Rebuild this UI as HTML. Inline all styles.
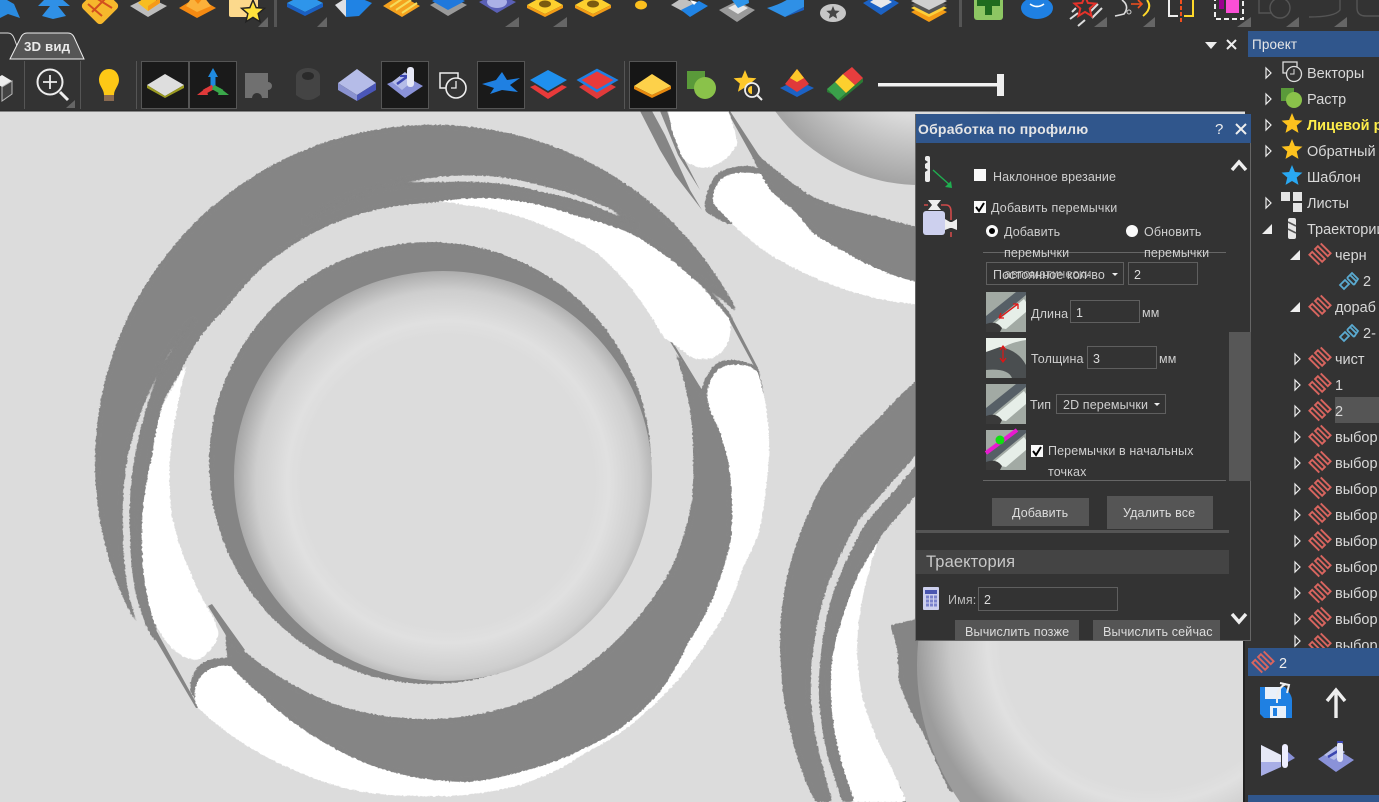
<!DOCTYPE html>
<html><head><meta charset="utf-8"><style>
html,body{margin:0;padding:0;width:1379px;height:802px;overflow:hidden;background:#333}
svg{display:block}
text{font-family:"Liberation Sans","DejaVu Sans",sans-serif;fill:#cfcfcf;font-size:12.5px;letter-spacing:.12px}
.tr{font-size:14.5px;fill:#d8d8d8;letter-spacing:0}
</style></head><body>
<svg width="1379" height="802" viewBox="0 0 1379 802" xmlns="http://www.w3.org/2000/svg">
<defs>
<radialGradient id="bowl" gradientUnits="userSpaceOnUse" cx="448" cy="482" r="218"><stop offset="0" stop-color="#dcdcdc"/><stop offset=".67" stop-color="#dcdcdc"/><stop offset=".74" stop-color="#e0e0e0"/><stop offset=".88" stop-color="#cecece"/><stop offset="1" stop-color="#a0a0a0"/></radialGradient>
<radialGradient id="bowl2" gradientUnits="userSpaceOnUse" cx="1150" cy="640" r="233"><stop offset=".64" stop-color="#dcdcdc"/><stop offset=".7" stop-color="#e0e0e0"/><stop offset=".86" stop-color="#c8c8c8"/><stop offset="1" stop-color="#9c9c9c"/></radialGradient>
<radialGradient id="bowl3" gradientUnits="userSpaceOnUse" cx="925" cy="5" r="180"><stop offset=".62" stop-color="#dcdcdc"/><stop offset="1" stop-color="#a4a4a4"/></radialGradient>
<filter id="b6"><feGaussianBlur stdDeviation="6"/></filter>
<filter id="sm" filterUnits="userSpaceOnUse" x="-20" y="80" width="1300" height="760" color-interpolation-filters="sRGB">
<feGaussianBlur stdDeviation="2"/>
<feComponentTransfer result="a"><feFuncA type="linear" slope="8" intercept="-3.5"/></feComponentTransfer>
<feTurbulence type="fractalNoise" baseFrequency=".45" numOctaves="1" seed="3" result="n"/>
<feDisplacementMap in="a" in2="n" scale="3" xChannelSelector="R" yChannelSelector="G"/>
</filter>
<polygon id="star" points="0,-1 .264,-.364 .951,-.309 .428,.139 .588,.809 0,.45 -.588,.809 -.428,.139 -.951,-.309 -.264,-.364"/>
<path id="zz" transform="rotate(45)" d="M-7,-8H7V-4H-7V0H7V4H-7V8H7" fill="none" stroke="#d8655f" stroke-width="1.9"/>
<path id="hz" d="M0,-5 L5,0 L0,5 Z" fill="none" stroke="#eee" stroke-width="1.2"/>
<path id="ex" d="M5,-5 V5 H-5 Z" fill="#eee"/>
<g id="thb"><rect width="40" height="40" fill="#a2aaa4"/><polygon points="0,24 30,0 40,0 40,3 0,36" fill="#565f66"/><polygon points="8,32 38,7 40,10 40,20 20,37 14,36" fill="#e6eee8"/><path d="M0,40 V32 Q10,28 16,36 L14,40 Z" fill="#3a3a3a"/></g>
<path id="rol" d="M1,14 L5,18 L10,13 L6,9 Z M8,7 L15,14 M11,4 L18,11 M8,7 L13,2 L19,8 L15,14" fill="none" stroke="#5aaad0" stroke-width="1.8"/>
</defs>

<rect width="1379" height="802" fill="#333"/>

<!-- 3D viewport -->
<rect x="0" y="111" width="1245" height="691" fill="#dcdcdc"/>
<svg x="0" y="111" width="1245" height="691" viewBox="0 111 1245 691" overflow="hidden">
<!-- thin tails -->
<g fill="#858585">
<polygon points="640,111 652,111 665,135 690,190 702,210 675,175 660,150"/>
<polygon points="660,111 667,111 682,155 700,190 678,155"/>
<polygon points="647,303 650,305 702,390 699,390"/>
<polygon points="150,630 156,630 199,708 196,708"/>
<polygon points="727,111 730,111 762,160 757,165"/>
<polygon points="728,318 732,318 758,368 755,368"/>
<polygon points="208,606 212,604 245,650 238,655"/>
<polygon points="897,786 900,786 906,802 903,802"/>
</g>
<!-- cap blobs -->
<g fill="#858585" filter="url(#sm)">
<path d="M190,692 Q190,672 202,663 Q220,654 240,660 L260,690 L205,712 Z"/>
<path d="M700,395 Q705,372 718,362 Q735,356 758,367 L764,395 L720,415 Z"/>
<path d="M705,212 Q704,188 718,173 Q735,163 757,167 L785,200 L730,225 Z"/>
</g>
<!-- white lobes -->
<g fill="#fff" filter="url(#sm)">
<path d="M197,343 A300,300 0 0 0 188,363 300,300 0 0 0 177,410 300,300 0 0 0 170,460 300,300 0 0 0 172,517 300,300 0 0 0 188,567 300,300 0 0 0 213,617 L219,633 Q215,650 198,660 Q180,660 165,640 L140,600 L135,530 L145,460 L160,410 Z"/>
<path d="M197,707 A320,320 0 0 0 220,727 320,320 0 0 0 287,767 320,320 0 0 0 353,790 320,320 0 0 0 420,796 320,320 0 0 0 453,796 320,320 0 0 0 520,785 320,320 0 0 0 553,772 320,320 0 0 0 587,752 320,320 0 0 0 620,733 320,320 0 0 0 664,695 320,320 0 0 0 700,652 320,320 0 0 0 728,607 320,320 0 0 0 743,567 320,320 0 0 0 759,533 320,320 0 0 0 765,495 320,320 0 0 0 769,433 320,320 0 0 0 765,400 L758,372 Q745,360 722,367 Q708,375 707,397 L700,400 L705,460 L705,600 L600,700 L437,770 L320,730 L263,690 L238,667 Q218,662 205,672 Q190,685 197,707 Z"/>
<path d="M430,200 L480,192 L530,197 L580,211 L630,227 L680,261 L713,294 L730,320 Q733,345 718,355 Q708,362 692,358 A300,300 0 0 0 663,337 300,300 0 0 0 630,287 300,300 0 0 0 597,253 300,300 0 0 0 547,227 300,300 0 0 0 480,207 Z"/>
<path d="M667,105 L727,105 L738,142 Q730,162 707,168 Q690,168 682,157 L672,130 Z"/>
<path d="M713,203 Q712,185 725,176 Q745,168 775,178 L813,225 L863,258 L925,277 L925,305 A300,300 0 0 1 863,295 300,300 0 0 1 813,277 300,300 0 0 1 763,250 300,300 0 0 1 713,203 Z"/>
<path d="M883,530 A300,300 0 0 0 868,575 300,300 0 0 0 857,653 300,300 0 0 0 863,700 300,300 0 0 0 891,767 L907,802 L845,802 L825,700 L827,653 L840,610 L855,570 Z"/>
</g>
<!-- dark bands -->
<g fill="#858585" filter="url(#sm)">
<path d="M155,655 A338,338 0 0 1 480,128 A338,338 0 0 1 740,317 A320,320 0 0 0 680,267 320,320 0 0 0 613,210 320,320 0 0 0 547,187 320,320 0 0 0 500,177 320,320 0 0 0 430,178 320,320 0 0 0 347,198 320,320 0 0 0 280,240 320,320 0 0 0 213,300 320,320 0 0 0 170,350 320,320 0 0 0 140,415 320,320 0 0 0 128,455 320,320 0 0 0 123,500 320,320 0 0 0 123,533 320,320 0 0 0 130,600 320,320 0 0 0 145,640 Z"/>
<path d="M135,455 A300,300 0 0 1 143,420 300,300 0 0 1 160,373 300,300 0 0 1 187,330 300,300 0 0 1 220,287 300,300 0 0 1 267,243 300,300 0 0 1 313,218 300,300 0 0 1 380,188 300,300 0 0 1 447,182 300,300 0 0 1 480,182 300,300 0 0 1 547,193 300,300 0 0 1 597,207 300,300 0 0 1 647,233 300,300 0 0 1 697,280 300,300 0 0 1 730,313 L757,367 L730,320 A300,300 0 0 0 713,300 300,300 0 0 0 680,267 300,300 0 0 0 630,233 300,300 0 0 0 580,217 300,300 0 0 0 530,203 300,300 0 0 0 480,198 300,300 0 0 0 430,203 300,300 0 0 0 363,213 300,300 0 0 0 313,233 300,300 0 0 0 263,267 300,300 0 0 0 227,307 300,300 0 0 0 203,333 300,300 0 0 0 180,373 300,300 0 0 0 163,403 300,300 0 0 0 155,437 300,300 0 0 0 152,457 300,300 0 0 0 142,525 300,300 0 0 0 148,600 300,300 0 0 0 163,647 L150,635 A300,300 0 0 1 136,595 300,300 0 0 1 130,533 300,300 0 0 1 130,500 300,300 0 0 1 135,455 Z"/>
<path d="M227,662 A300,300 0 0 0 263,697 300,300 0 0 0 320,740 300,300 0 0 0 370,765 300,300 0 0 0 420,778 300,300 0 0 0 470,782 300,300 0 0 0 520,772 300,300 0 0 0 587,747 300,300 0 0 0 620,729 300,300 0 0 0 660,692 300,300 0 0 0 688,643 300,300 0 0 0 706,613 300,300 0 0 0 722,573 300,300 0 0 0 731,540 300,300 0 0 0 732,507 300,300 0 0 0 728,460 300,300 0 0 0 720,433 300,300 0 0 0 710,410 L707,397 L670,343 A300,300 0 0 1 680,367 300,300 0 0 1 690,410 300,300 0 0 1 693,460 300,300 0 0 1 692,500 300,300 0 0 1 672,567 300,300 0 0 1 620,637 300,300 0 0 1 520,703 300,300 0 0 1 453,718 300,300 0 0 1 403,718 300,300 0 0 1 337,705 300,300 0 0 1 280,677 300,300 0 0 1 243,650 L225,628 Z"/>
<path d="M745,140 A250,250 0 0 0 760,157 250,250 0 0 0 780,173 250,250 0 0 0 813,197 250,250 0 0 0 863,213 L925,229 L925,284 A250,250 0 0 1 880,270 250,250 0 0 1 847,253 250,250 0 0 1 813,233 250,250 0 0 1 797,213 250,250 0 0 1 770,190 L757,167 Z"/>
<path d="M925,375 L915,382 A300,300 0 0 0 880,417 300,300 0 0 0 840,460 300,300 0 0 0 822,485 300,300 0 0 0 807,517 300,300 0 0 0 783,600 300,300 0 0 0 781,667 300,300 0 0 0 791,733 300,300 0 0 0 815,802 L833,802 A300,300 0 0 1 823,767 300,300 0 0 1 811,700 300,300 0 0 1 813,653 300,300 0 0 1 823,600 300,300 0 0 1 843,550 300,300 0 0 1 859,520 300,300 0 0 1 879,497 L925,445 Z"/>
<path d="M925,455 L886,500 A300,300 0 0 0 866,523 300,300 0 0 0 850,553 300,300 0 0 0 831,600 300,300 0 0 0 821,653 300,300 0 0 0 819,700 300,300 0 0 0 831,767 L842,802 L855,802 A300,300 0 0 1 843,767 300,300 0 0 1 831,700 300,300 0 0 1 833,653 300,300 0 0 1 845,610 300,300 0 0 1 859,573 L883,533 L925,485 Z"/>
<polygon points="890,625 897,647 899,683 910,710 923,733 951,795 1000,720 1000,600"/>
<circle cx="430" cy="463" r="221"/>
</g>
<path d="M775,111 A180,180 0 0 0 925,185 H1000 V111 Z" fill="url(#bowl3)"/>
<ellipse cx="443" cy="476" rx="209" ry="205" fill="url(#bowl)"/>
<path d="M960,802 A240,240 0 0 1 917,665 A240,240 0 0 1 1157,425 H1245 V802 Z" fill="url(#bowl2)"/>
</svg>
<rect x="0" y="110" width="1245" height="1.5" fill="#2c2c2c"/>
<rect x="1243" y="640" width="2" height="162" fill="#222"/>

<!-- TOP TOOLBAR -->
<g>
<polygon points="0,-4 14,4 20,18 8,14 0,18" fill="#2a8be0"/>
<polygon points="38,6 50,-6 53,-4 56,-6 70,6 58,6 66,16 53,19 42,16 50,6" fill="#2f90e6"/>
<g><rect x="86" y="-8" width="28" height="28" transform="rotate(45 100 6)" rx="4" fill="#f6b82c"/><path d="M88,4 L102,16 M96,-2 L112,8 M106,-2 L92,12" stroke="#d2501e" stroke-width="2" fill="none"/></g>
<polygon points="130,6 148,-3 167,6 148,17" fill="#bdbdbd"/><polygon points="138,3 148,-6 160,3 148,11" fill="#f8bd20"/><polygon points="148,11 160,3 160,-2 148,6" fill="#f59a1a"/>
<polygon points="179,8 197,-3 216,8 197,18" fill="#f58a12"/><polygon points="186,6 192,-3 198,4 204,-3 211,6 197,12" fill="#fbb13a"/>
<rect x="229" y="-4" width="29" height="21" rx="2" fill="#fcd98c"/><use href="#star" transform="translate(253,12) scale(12)" fill="#ffe23c" stroke="#222" stroke-width=".12"/>
<polygon points="258,27 268,27 268,17" fill="#666"/>
<rect x="274" y="0" width="3" height="27" fill="#555"/>
<polygon points="287,3 305,-6 323,3 305,12" fill="#2e95ea"/><polygon points="287,3 305,12 323,3 323,7 305,16 287,7" fill="#1a5fc2"/>
<polygon points="317,27 327,27 327,17" fill="#666"/>
<polygon points="335,5 346,-2 346,17" fill="#dfe0e4"/><path d="M346,-2 H360 L372,3 L359,16 L346,17 Z" fill="#2083e4"/>
<polygon points="383,6 400,-5 420,6 402,17" fill="#f5a21e"/><path d="M390,7 L405,-3 M396,10 L411,0 M402,13 L417,3" stroke="#f5dc5a" stroke-width="2"/>
<polygon points="430,5 448,-4 467,5 448,16" fill="#9a9a9a"/><polygon points="432,1 448,-7 465,1 448,10" fill="#1f78dc"/>
<polygon points="479,2 497,-7 516,2 497,13" fill="#5a60b6"/><ellipse cx="497" cy="2" rx="10" ry="6" fill="#aab0e6"/>
<polygon points="505,27 519,27 519,17" fill="#666"/>
<polygon points="527,5 545,-5 563,5 545,14" fill="#fdd02e"/><polygon points="527,5 545,14 563,5 563,8 545,17 527,8" fill="#f39c16"/><ellipse cx="545" cy="4" rx="6" ry="3.5" fill="#7a5a10"/>
<polygon points="553,27 567,27 567,17" fill="#666"/>
<polygon points="575,5 593,-5 611,5 593,14" fill="#fdd02e"/><polygon points="575,5 593,14 611,5 611,8 593,17 575,8" fill="#f39c16"/><ellipse cx="593" cy="4" rx="6" ry="3.5" fill="#7a5a10"/>
<ellipse cx="641" cy="5" rx="6" ry="4.5" fill="#fbbf1e"/>
<polygon points="671,5 682,-2 700,5 686,13" fill="#c0c0c0"/><polygon points="681,10 699,1 708,6 690,17" fill="#2083e4"/><path d="M690,0 l4,5 3,-3" fill="#fff"/>
<polygon points="719,10 737,1 755,10 737,22" fill="#9a9a9a"/><polygon points="728,8 738,3 748,8 738,14" fill="#e6e6e6"/><polygon points="732,0 748,-6 749,3 738,8" fill="#2e95ea"/>
<path d="M767,8 Q785,3 795,-6 H804 V7 L785,17 Z" fill="#2f90e6"/><polygon points="767,8 785,17 804,7 804,10 785,17" fill="#1a5fc2"/>
<ellipse cx="833" cy="13" rx="13" ry="9" fill="#c6c6c6"/><use href="#star" transform="translate(833,13) scale(7)" fill="#444"/>
<polygon points="863,3 881,-7 899,3 881,15" fill="#1c62c4"/><polygon points="870,2 881,-5 892,2 881,8" fill="#e8e8ea"/>
<polygon points="911,12 929,3 947,12 929,22" fill="#f39c16"/><polygon points="911,8 929,-1 947,8 929,17" fill="#fcd03a"/><polygon points="911,5 929,-4 947,5 929,14" fill="#555"/><polygon points="911,1 929,-8 947,1 929,10" fill="#cfcfcf"/>
<rect x="959" y="0" width="3" height="27" fill="#555"/>
<rect x="974" y="-6" width="29" height="26" rx="3" fill="#8dc663"/><rect x="985" y="-6" width="7" height="21" fill="#1e6b1e"/><rect x="977" y="0" width="23" height="6" fill="#1e6b1e"/>
<ellipse cx="1037" cy="8" rx="16" ry="11" fill="#1f80e2"/><path d="M1030,4 Q1037,9 1044,4" stroke="#fff" stroke-width="1.6" fill="none"/>
<path d="M1070,19 L1078,13 M1072,12 L1076,8 M1098,4 L1090,12 M1102,8 L1092,18 M1085,20 L1078,26" stroke="#ddd" stroke-width="2"/>
<use href="#star" transform="translate(1085,7) scale(11)" fill="none" stroke="#e5322a" stroke-width=".18"/>
<polygon points="1094,27 1107,27 1107,17" fill="#666"/>
<path d="M1122,0 Q1130,6 1124,14 Q1120,15 1115,16" stroke="#ddd" stroke-width="1.6" fill="none"/><circle cx="1129" cy="12" r="2" fill="none" stroke="#ccc"/><path d="M1131,4 H1142 M1138,0 L1142,4 L1138,8" stroke="#f2501e" stroke-width="1.6" fill="none"/><path d="M1147,0 Q1153,8 1143,16" stroke="#ffd92a" stroke-width="2" fill="none"/>
<polygon points="1143,27 1155,27 1155,17" fill="#666"/>
<path d="M1169,0 V16 H1178" stroke="#eee" stroke-width="2" fill="none"/><path d="M1193,0 V16 H1184" stroke="#ffd92a" stroke-width="2" fill="none"/><path d="M1181,0 V24" stroke="#f2501e" stroke-width="2" stroke-dasharray="4 2"/>
<rect x="1215" y="-3" width="28" height="22" fill="none" stroke="#eee" stroke-width="2" stroke-dasharray="5 3"/><rect x="1226" y="0" width="13" height="13" fill="#fb4fd6"/><rect x="1219" y="-3" width="5" height="12" fill="#9c0090"/>
<polygon points="1237,27 1251,27 1251,17" fill="#666"/>
<path d="M1259,-2 V13 H1272" stroke="#555" fill="none" stroke-width="1.4"/><circle cx="1280" cy="8" r="10" fill="none" stroke="#555" stroke-width="1.4"/>
<polygon points="1286,27 1299,27 1299,17" fill="#666"/>
<path d="M1309,17 Q1335,17 1340,10 V0" stroke="#555" fill="none" stroke-width="1.4"/>
<polygon points="1334,27 1347,27 1347,17" fill="#666"/>
<path d="M1357,0 V8 Q1357,16 1366,16 H1379" stroke="#555" fill="none" stroke-width="1.4"/>
</g>

<!-- TABS -->
<path d="M0,33 H8 Q12,33 14,38 L17,46" fill="none" stroke="#ddd"/>
<path d="M10,59 L21,37 Q23,33 27,33 H68 Q72,33 74,37 L84,59 Z" fill="#555" stroke="#eee" stroke-width="1"/>
<text x="24" y="51" style="font-size:13.3px;font-weight:700;fill:#eaeaea">3D вид</text>
<polygon points="1205,42 1217,42 1211,49" fill="#eee"/>
<path d="M1227,40 L1236,49 M1236,40 L1227,49" stroke="#eee" stroke-width="2"/>

<!-- SECOND TOOLBAR -->
<g>
<polygon points="-8,81 2,75 12,81 2,87" fill="#eee"/><polygon points="12,81 12,94 2,101 2,87" fill="#444" stroke="#bbb"/>
<rect x="24" y="61" width="1" height="48" fill="#555"/><rect x="80" y="61" width="1" height="48" fill="#555"/><rect x="136" y="61" width="1" height="48" fill="#555"/><rect x="624" y="61" width="1" height="48" fill="#555"/>
<circle cx="50" cy="82" r="12.5" fill="none" stroke="#eee" stroke-width="2"/><path d="M43,82 H57 M50,75 V89" stroke="#eee" stroke-width="1.8"/><path d="M60,92 L68,100" stroke="#eee" stroke-width="3"/>
<polygon points="66,108 75,108 75,100" fill="#666"/>
<path d="M109,69 C102,69 99,75 99,80 C99,86 104,89 104,95 H114 C114,89 119,86 119,80 C119,75 116,69 109,69 Z" fill="#fdc816"/><rect x="104" y="95" width="10" height="6" fill="#8a6a50"/>
<rect x="141.5" y="61.5" width="47" height="47" fill="#1a1a1a" stroke="#555"/><rect x="189.5" y="61.5" width="47" height="47" fill="#1a1a1a" stroke="#555"/>
<polygon points="147,85 165,74 184,85 165,96" fill="#dedede"/><polygon points="147,85 165,96 184,85 184,88 165,98 147,88" fill="#9a9a20"/>
<path d="M213,88 V75" stroke="#1f8ae0" stroke-width="5"/><polygon points="213,68 208,77 218,77" fill="#1f8ae0"/>
<path d="M213,87 L204,92" stroke="#e03a3a" stroke-width="5"/><polygon points="197,95 206,88 208,95" fill="#e03a3a"/>
<path d="M213,87 L222,92" stroke="#3aa84a" stroke-width="5"/><polygon points="229,95 220,88 218,95" fill="#3aa84a"/>
<path d="M245,73 H268 V82 A4,4 0 1 1 268,90 V98 H262 A5,5 0 0 0 252,98 H245 Z" fill="#707070"/>
<ellipse cx="308" cy="76" rx="12" ry="8" fill="#444"/><ellipse cx="308" cy="76" rx="6" ry="4" fill="#2a2a2a"/><path d="M296,76 V95 Q308,105 320,95 V76 Q308,84 296,76 Z" fill="#444"/>
<polygon points="338,83 357,69 376,83 357,95" fill="#b5bce8"/><polygon points="338,83 357,95 357,101 338,90" fill="#8a92d0"/><polygon points="376,83 357,95 357,101 376,90" fill="#4a56b8"/>
<rect x="381.5" y="61.5" width="47" height="47" fill="#1a1a1a" stroke="#555"/>
<polygon points="387,84 405,76 423,86 405,98" fill="#8a92d8"/><polygon points="392,82 405,72 414,80 402,90" fill="#b5bce8"/><path d="M397,84 L408,76" stroke="#3b46b0" stroke-width="2.5"/><rect x="407" y="67" width="7" height="20" rx="3" fill="#e6e8f6"/><path d="M400,76 H407" stroke="#3b46b0" stroke-width="2"/>
<path d="M451,88 H440 V73 H458 V80" fill="none" stroke="#eee" stroke-width="1.5"/><circle cx="456" cy="88" r="10" fill="#333" stroke="#eee" stroke-width="1.6"/><path d="M456,81 V88 H451" stroke="#eee" stroke-width="1.3" fill="none"/>
<rect x="477.5" y="61.5" width="47" height="47" fill="#1a1a1a" stroke="#555"/>
<polygon points="482,84 496,80 502,72 507,80 520,78 510,85 518,92 502,90 490,94 494,88" fill="#1f80e2"/>
<polygon points="530,80 548,70 567,80 548,91" fill="#1f90ee"/><polygon points="530,87 535,85 548,93 562,85 567,87 548,99" fill="#e83a3a"/>
<polygon points="579,87 597,77 616,87 597,99" fill="#e03a3a"/><polygon points="579,80 597,70 616,80 597,91" fill="#e83a3a" stroke="#1f80e2" stroke-width="2.5"/>
<rect x="629.5" y="61.5" width="47" height="47" fill="#161616" stroke="#555"/>
<polygon points="634,86 652,74 671,86 652,95" fill="#fdd14a"/><polygon points="634,86 652,95 671,86 671,89 652,98 634,89" fill="#e8890e"/>
<rect x="687" y="71" width="18" height="18" fill="#5a9a3a"/><circle cx="705" cy="88" r="11" fill="#8ac24a"/>
<use href="#star" transform="translate(745,82) scale(12)" fill="#fdc82a"/><circle cx="752" cy="90" r="7" fill="#333" stroke="#eee" stroke-width="1.8"/><path d="M752,86 A4,4 0 0 0 752,94 Z" fill="#fdc82a"/><path d="M757,95 L762,100" stroke="#eee" stroke-width="2"/>
<polygon points="780,88 797,80 814,88 797,97" fill="#1c62c4"/><polygon points="785,84 797,69 809,84 797,92" fill="#e03a3a"/><polygon points="790,78 797,69 804,78 797,82" fill="#fdc82a"/>
<polygon points="827,89 838,100 838,97 827,92" fill="#2a7a34"/><polygon points="838,100 863,78 863,82 840,101" fill="#2a7a34"/>
<polygon points="827,89 835,82 846,93 838,100" fill="#3aa04a"/><polygon points="835,82 843,74 855,85 846,93" fill="#fdd02e"/><polygon points="843,74 852,67 863,78 855,85" fill="#e63e3e"/>
<rect x="878" y="83" width="120" height="3.5" fill="#f2f2f2"/><rect x="997" y="74" width="7" height="22" fill="#eee"/>
</g>

<!-- PROJECT SIDEBAR -->
<rect x="1245" y="28" width="134" height="774" fill="#333"/>
<rect x="1248" y="31" width="131" height="26" fill="#30568c"/>
<text x="1252" y="49" style="font-size:13.5px;fill:#e8e8e8">Проект</text>
<use href="#hz" x="1266" y="73"/><use href="#hz" x="1266" y="99"/><use href="#hz" x="1266" y="125"/><use href="#hz" x="1266" y="151"/><use href="#hz" x="1266" y="203"/>
<use href="#ex" x="1267" y="229"/><use href="#ex" x="1295" y="255"/><use href="#ex" x="1295" y="307"/>
<use href="#hz" x="1295" y="359"/><use href="#hz" x="1295" y="385"/><use href="#hz" x="1295" y="411"/><use href="#hz" x="1295" y="437"/><use href="#hz" x="1295" y="463"/><use href="#hz" x="1295" y="489"/><use href="#hz" x="1295" y="515"/><use href="#hz" x="1295" y="541"/><use href="#hz" x="1295" y="567"/><use href="#hz" x="1295" y="593"/><use href="#hz" x="1295" y="619"/><use href="#hz" x="1295" y="641"/>
<path d="M1290,73 H1283 V62 H1297 V68" fill="none" stroke="#ddd" stroke-width="1.3"/><circle cx="1294" cy="74" r="7.5" fill="#333" stroke="#ddd" stroke-width="1.3"/><path d="M1294,69 V74 H1290" stroke="#ddd" fill="none"/>
<rect x="1281" y="88" width="13" height="13" fill="#5a9a3a"/><circle cx="1294" cy="100" r="8" fill="#8ac24a"/>
<use href="#star" transform="translate(1292,124) scale(11)" fill="#fdc21e"/>
<use href="#star" transform="translate(1292,150) scale(11)" fill="#fdc21e"/>
<use href="#star" transform="translate(1292,176) scale(11)" fill="#29a8f2"/>
<rect x="1281" y="192" width="9" height="9" fill="#e4e4e4"/><rect x="1293" y="192" width="9" height="9" fill="#e4e4e4"/><rect x="1293" y="203" width="9" height="9" fill="#e4e4e4"/>
<rect x="1288" y="218" width="8" height="21" rx="2" fill="#e6e6e6"/><path d="M1288,222 L1296,226 M1288,229 L1296,233" stroke="#555" stroke-width="1.6"/>
<text class="tr" x="1307" y="78">Векторы</text>
<text class="tr" x="1307" y="104">Растр</text>
<text class="tr" x="1307" y="130" style="font-weight:700;fill:#ffee4a">Лицевой р</text>
<text class="tr" x="1307" y="156">Обратный</text>
<text class="tr" x="1307" y="182">Шаблон</text>
<text class="tr" x="1307" y="208">Листы</text>
<text class="tr" x="1307" y="234">Траектории</text>
<use href="#zz" transform="translate(1320,254)"/><text class="tr" x="1335" y="260">черн</text>
<use href="#rol" x="1339" y="271"/><text class="tr" x="1363" y="286">2</text>
<use href="#zz" transform="translate(1320,306)"/><text class="tr" x="1335" y="312">дораб</text>
<use href="#rol" x="1339" y="323"/><text class="tr" x="1363" y="338">2-</text>
<use href="#zz" transform="translate(1320,358)"/><text class="tr" x="1335" y="364">чист</text>
<use href="#zz" transform="translate(1320,384)"/><text class="tr" x="1335" y="390">1</text>
<rect x="1335" y="397" width="44" height="26" fill="#555"/>
<use href="#zz" transform="translate(1320,410)"/><text class="tr" x="1335" y="416">2</text>
<use href="#zz" transform="translate(1320,436)"/><text class="tr" x="1335" y="442">выбор</text>
<use href="#zz" transform="translate(1320,462)"/><text class="tr" x="1335" y="468">выбор</text>
<use href="#zz" transform="translate(1320,488)"/><text class="tr" x="1335" y="494">выбор</text>
<use href="#zz" transform="translate(1320,514)"/><text class="tr" x="1335" y="520">выбор</text>
<use href="#zz" transform="translate(1320,540)"/><text class="tr" x="1335" y="546">выбор</text>
<use href="#zz" transform="translate(1320,566)"/><text class="tr" x="1335" y="572">выбор</text>
<use href="#zz" transform="translate(1320,592)"/><text class="tr" x="1335" y="598">выбор</text>
<use href="#zz" transform="translate(1320,618)"/><text class="tr" x="1335" y="624">выбор</text>
<use href="#zz" transform="translate(1320,644)"/><text class="tr" x="1335" y="650">выбор</text>
<rect x="1248" y="648" width="131" height="28" fill="#30568c"/>
<use href="#zz" transform="translate(1263,662)"/><text class="tr" x="1279" y="668" style="fill:#eee">2</text>
<!-- bottom sidebar icons -->
<path d="M1260,687 H1285 Q1292,695 1292,700 V718 H1264 L1260,714 Z" fill="#1f80e2"/><rect x="1265" y="687" width="16" height="12" fill="#e8f0fa"/><rect x="1270" y="706" width="16" height="12" fill="#e8f0fa"/><rect x="1273" y="708" width="4" height="8" fill="#1f80e2"/>
<path d="M1277,703 V695 Q1280,686 1286,684 M1280,683 L1289,685 L1287,693" fill="none" stroke="#eee" stroke-width="2"/>
<path d="M1336,718 V693" stroke="#eee" stroke-width="3.4"/><path d="M1327,701 L1336,690 L1345,701" fill="none" stroke="#eee" stroke-width="3.4"/>
<polygon points="1261,745 1281,755 1281,767 1261,776" fill="#a8aee6"/><polygon points="1261,745 1281,755 1281,762 1261,762" fill="#e6e8f6"/><rect x="1282" y="744" width="6" height="24" rx="3" fill="#eef"/><polygon points="1288,752 1295,758 1288,762" fill="#8a92d8"/>
<polygon points="1318,759 1335,748 1354,760 1336,772" fill="#8a92d8"/><polygon points="1324,755 1336,746 1345,752 1334,760" fill="#b5bce8"/><path d="M1328,757 L1338,751" stroke="#3b46b0" stroke-width="2.5"/><rect x="1337" y="742" width="6" height="20" rx="3" fill="#e6e8f6"/><path d="M1337,742 H1343" stroke="#3b46b0" stroke-width="2"/>
<rect x="1248" y="795" width="131" height="7" fill="#30568c"/>

<!-- DIALOG -->
<rect x="915.5" y="114.5" width="335" height="526" fill="#333" stroke="#666"/>
<rect x="916" y="114" width="335" height="29" fill="#30568c"/>
<text x="918" y="134" style="font-size:14px;font-weight:700;fill:#e6e6e6;letter-spacing:.2px">Обработка по профилю</text>
<text x="1215" y="134" style="font-size:15px;fill:#eee">?</text>
<path d="M1236,124 L1246,134 M1246,124 L1236,134" stroke="#eee" stroke-width="2"/>
<path d="M1232,170 L1239,162 L1246,170" fill="none" stroke="#eee" stroke-width="3.4"/>
<path d="M1232,614 L1239,622 L1246,614" fill="none" stroke="#eee" stroke-width="3.4"/>
<rect x="1229" y="332" width="22" height="149" fill="#575757"/>

<rect x="925" y="156" width="5" height="26" rx="2" fill="#ececec"/><path d="M925,160 l3,2 -3,2 M925,168 l3,2 -3,2" fill="#333"/>
<path d="M933,170 L951,186" stroke="#1faf50" stroke-width="1.4"/><polygon points="952,188 945,187 951,181" fill="#1faf50"/>
<rect x="923" y="211" width="22" height="24" rx="3" fill="#cdd0ee"/>
<polygon points="928,200 941,200 937,205 941,210 928,210 932,205" fill="#eee"/><path d="M924,205 H928 M941,205 H946 Q951,205 951,212 V220 M951,232 V237" stroke="#d04a4a" stroke-width="1.6" fill="none"/><polygon points="945,219 950,222 952,222 957,219 957,230 952,228 950,228 945,230" fill="#eee"/>

<rect x="974" y="169" width="12" height="12" fill="#fafafa"/>
<text x="993" y="181">Наклонное врезание</text>
<rect x="974" y="201" width="12" height="12" fill="#fafafa"/><path d="M976,207 L979,211 L984,203" fill="none" stroke="#000" stroke-width="2"/>
<text x="991" y="212" style="letter-spacing:.2px">Добавить перемычки</text>
<circle cx="992" cy="231" r="6" fill="#fafafa"/><circle cx="992" cy="231" r="3" fill="#000"/>
<text x="1004" y="236">Добавить</text>
<circle cx="1132" cy="231" r="6" fill="#fafafa"/>
<text x="1144" y="236">Обновить</text>
<rect x="983" y="252" width="243" height="1" fill="#666"/>
<text x="1004" y="257">перемычки</text>
<text x="1144" y="257">перемычки</text>
<rect x="986.5" y="262.5" width="137" height="22" fill="#333" stroke="#5f5f5f"/>
<text x="1004" y="278" style="fill:#aaa">автоматически</text>
<text x="993" y="279">Постоянное кол-во</text>
<polygon points="1112,273 1118,273 1115,276" fill="#eee"/>
<rect x="1128.5" y="262.5" width="69" height="22" fill="#333" stroke="#5f5f5f"/>
<text x="1134" y="279" style="fill:#ddd">2</text>

<use href="#thb" x="986" y="292"/>
<path d="M999,318 L1018,304 M999,318 l2,-5 M999,318 l5,0 M1018,304 l-5,0 M1018,304 l0,5" stroke="#e01515" stroke-width="1.3" fill="none"/>
<text x="1031" y="318">Длина</text>
<rect x="1070.5" y="300.5" width="69" height="22" fill="#333" stroke="#5f5f5f"/>
<text x="1076" y="317" style="fill:#ddd">1</text><text x="1142" y="317">мм</text>

<rect x="986" y="338" width="40" height="40" fill="#a2aaa4"/>
<path d="M986,338 H1026 V340 Q1012,342 1002,348 L986,352 Z" fill="#eaf0ea"/>
<path d="M986,352 L1000,347 Q1018,350 1026,365 V378 H1012 Q1008,368 986,370 Z" fill="#4a4e50"/>
<path d="M1003,347 V361 M1000,350 L1003,346 L1006,350 M1000,358 L1003,362 L1006,358" stroke="#e01515" stroke-width="1.2" fill="none"/>
<text x="1031" y="363">Толщина</text>
<rect x="1087.5" y="346.5" width="69" height="22" fill="#333" stroke="#5f5f5f"/>
<text x="1093" y="363" style="fill:#ddd">3</text><text x="1159" y="363">мм</text>

<use href="#thb" x="986" y="384"/>
<text x="1030" y="409">Тип</text>
<rect x="1056.5" y="394.5" width="109" height="19" fill="#333" stroke="#5f5f5f"/>
<text x="1063" y="409">2D перемычки</text>
<polygon points="1154,403 1160,403 1157,406" fill="#eee"/>

<use href="#thb" x="986" y="430"/>
<path d="M986,453 L1017,430" stroke="#e81ad0" stroke-width="4"/><circle cx="1000" cy="440" r="4.5" fill="#10e010"/>
<rect x="1031" y="445" width="12" height="12" fill="#fafafa"/><path d="M1033,451 L1036,455 L1041,447" fill="none" stroke="#000" stroke-width="2"/>
<text x="1048" y="455">Перемычки в начальных</text>
<text x="1048" y="476">точках</text>
<rect x="983" y="480" width="243" height="1" fill="#666"/>

<rect x="992" y="498" width="97" height="28" fill="#555"/>
<text x="1012" y="517" style="fill:#ddd">Добавить</text>
<rect x="1107" y="496" width="106" height="33" fill="#555"/>
<text x="1123" y="517" style="fill:#ddd">Удалить все</text>
<rect x="916" y="530" width="313" height="3" fill="#555"/>
<rect x="916" y="550" width="313" height="24" fill="#444"/>
<text x="926" y="567" style="font-size:16.5px;fill:#c8c8c8">Траектория</text>
<rect x="923" y="587" width="16" height="23" rx="1" fill="#cdd0ee"/><rect x="925" y="590" width="12" height="4" fill="#4a56b0"/>
<path d="M926,597 h3 m1,0 h3 m1,0 h3 M926,601 h3 m1,0 h3 m1,0 h3 M926,605 h3 m1,0 h3 m1,0 h3" stroke="#7a82cc" stroke-width="3"/>
<text x="948" y="604" style="fill:#bbb">Имя:</text>
<rect x="978.5" y="587.5" width="139" height="23" fill="#333" stroke="#5f5f5f"/>
<text x="984" y="604" style="fill:#ddd">2</text>
<rect x="955" y="620" width="124" height="20" fill="#555"/>
<text x="965" y="636" style="font-size:12.6px;fill:#ddd">Вычислить позже</text>
<rect x="1093" y="620" width="127" height="20" fill="#555"/>
<text x="1103" y="636" style="font-size:12.6px;fill:#ddd">Вычислить сейчас</text>
</svg>
</body></html>
